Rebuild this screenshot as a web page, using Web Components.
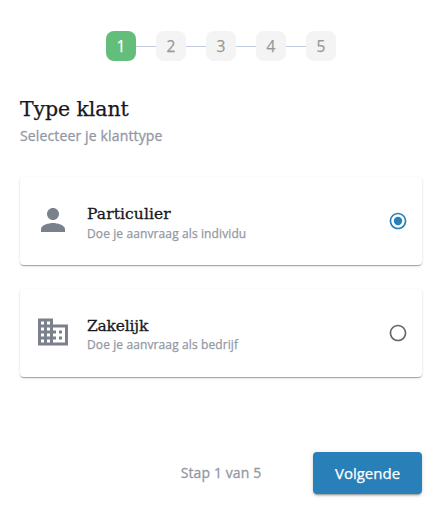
<!DOCTYPE html>
<html lang="nl">
<head>
<meta charset="utf-8">
<title>Type klant</title>
<style>
html,body{margin:0;background:#fff}
body{font-family:"Open Sans","Noto Sans",sans-serif;color:#16181d}
</style>
</head>
<body>
<customer-wizard></customer-wizard>
<script>
class StepIndicator extends HTMLElement {
  connectedCallback() {
    const total = +this.getAttribute('total'), current = +this.getAttribute('current');
    let html = '';
    for (let i = 1; i <= total; i++) {
      html += (i > 1 ? '<i></i>' : '') + `<span class="${i === current ? 'on' : ''}">${i}</span>`;
    }
    this.attachShadow({mode: 'open'}).innerHTML = `<style>
      :host{display:flex;justify-content:center;align-items:center;height:30px}
      span{box-sizing:border-box;width:30px;height:30px;border-radius:8px;background:#f4f4f4;color:#999;font-size:15.5px;line-height:31px;text-align:center;-webkit-text-stroke:.25px currentColor}
      .on{background:#63bd7b;color:#fff}
      i{width:20px;height:1px;background:#c3cadd}
    </style>${html}`;
  }
}
customElements.define('step-indicator', StepIndicator);

class PageHeading extends HTMLElement {
  connectedCallback() {
    this.attachShadow({mode: 'open'}).innerHTML = `<style>
      :host{display:block}
      h1{margin:0;font:400 20.5px/30px "DejaVu Serif",serif;letter-spacing:-.1px;-webkit-text-stroke:.25px #16181d;white-space:nowrap}
      p{margin:2px 0 0;font-size:14px;line-height:20px;letter-spacing:.14px;-webkit-text-stroke:.3px #9298a3;color:#9298a3;white-space:nowrap}
    </style><h1><slot></slot></h1><p><slot name="sub"></slot></p>`;
  }
}
customElements.define('page-heading', PageHeading);

class RadioMark extends HTMLElement {
  connectedCallback() {
    const on = this.hasAttribute('checked');
    this.attachShadow({mode: 'open'}).innerHTML = `<style>
      :host{display:block;width:20px;height:20px;color:${on ? '#2980b9' : '#666'}} svg{display:block}
    </style><svg width="20" height="20" viewBox="0 0 24 24" fill="currentColor">
      <path d="M12 2C6.48 2 2 6.48 2 12s4.48 10 10 10 10-4.48 10-10S17.52 2 12 2zm0 18c-4.42 0-8-3.58-8-8s3.58-8 8-8 8 3.58 8 8-3.58 8-8 8z"/>
      ${on ? '<circle cx="12" cy="12" r="5"/>' : ''}</svg>`;
  }
}
customElements.define('radio-mark', RadioMark);

class OptionCard extends HTMLElement {
  connectedCallback() {
    this.attachShadow({mode: 'open'}).innerHTML = `<style>
      :host{display:flex;align-items:center;box-sizing:border-box;height:88px;padding:0 14px 0 15px;border-radius:4px;background:#fff;
        box-shadow:0 2px 1px -1px rgba(0,0,0,.2),0 1px 1px 0 rgba(0,0,0,.14),0 1px 3px 0 rgba(0,0,0,.12)}
      ::slotted(svg){display:block;width:36px;height:36px;fill:#7b818c;flex:none;margin-top:-2px}
      .text{flex:1;margin-left:16px;padding-top:3px}
      h2{margin:0;font:400 15.5px/22px "DejaVu Serif",serif;-webkit-text-stroke:.3px #16181d;letter-spacing:var(--title-spacing,.1px);white-space:nowrap}
      p{margin:var(--sub-shift,0) 0 0;font-size:12px;line-height:18px;letter-spacing:.11px;-webkit-text-stroke:.25px #9298a3;color:#9298a3;white-space:nowrap}
    </style><slot name="icon"></slot><div class="text"><h2><slot></slot></h2><p><slot name="sub"></slot></p></div>
    <radio-mark ${this.hasAttribute('checked') ? 'checked' : ''}></radio-mark>`;
  }
}
customElements.define('option-card', OptionCard);

class WizardFooter extends HTMLElement {
  connectedCallback() {
    this.attachShadow({mode: 'open'}).innerHTML = `<style>
      :host{display:grid;grid-template-columns:1fr auto 1fr;align-items:center;height:42px}
      .status{grid-column:2;padding-bottom:2px;font-size:14px;letter-spacing:.1px;-webkit-text-stroke:.3px #9298a3;color:#9298a3;white-space:nowrap}
      button{justify-self:end;width:109px;height:42px;padding:0;border:0;border-radius:4px;background:#2980b9;color:#fff;font:400 15px/42px "Open Sans","Noto Sans",sans-serif;-webkit-text-stroke:.25px #fff;
        box-shadow:0 3px 1px -2px rgba(0,0,0,.2),0 2px 2px 0 rgba(0,0,0,.14),0 1px 5px 0 rgba(0,0,0,.12)}
    </style><span class="status"><slot></slot></span><button><slot name="next"></slot></button>`;
  }
}
customElements.define('wizard-footer', WizardFooter);

class CustomerWizard extends HTMLElement {
  connectedCallback() {
    this.attachShadow({mode: 'open'}).innerHTML = `<style>
      :host{display:block;box-sizing:border-box;width:443px;height:514px;padding:31px 21px 0 20px}
      page-heading{margin-top:33px}
      .cards{display:grid;gap:24px;margin-top:31px}
      .business{--title-spacing:-.2px;--sub-shift:-1px}
      wizard-footer{margin-top:75px}
    </style>
    <step-indicator total="5" current="1"></step-indicator>
    <page-heading>Type klant<span slot="sub">Selecteer je klanttype</span></page-heading>
    <div class="cards">
      <option-card checked>
        <svg slot="icon" viewBox="0 0 24 24"><path d="M12 12c2.21 0 4-1.79 4-4s-1.79-4-4-4-4 1.79-4 4 1.79 4 4 4zm0 2c-2.67 0-8 1.34-8 4v2h16v-2c0-2.66-5.33-4-8-4z"/></svg>
        Particulier<span slot="sub">Doe je aanvraag als individu</span>
      </option-card>
      <option-card class="business">
        <svg slot="icon" viewBox="0 0 24 24"><path d="M12 7V3H2v18h20V7H12zM6 19H4v-2h2v2zm0-4H4v-2h2v2zm0-4H4V9h2v2zm0-4H4V5h2v2zm4 12H8v-2h2v2zm0-4H8v-2h2v2zm0-4H8V9h2v2zm0-4H8V5h2v2zm10 12h-8v-2h2v-2h-2v-2h2v-2h-2V9h8v10zm-2-8h-2v2h2v-2zm0 4h-2v2h2v-2z"/></svg>
        Zakelijk<span slot="sub">Doe je aanvraag als bedrijf</span>
      </option-card>
    </div>
    <wizard-footer>Stap 1 van 5<span slot="next">Volgende</span></wizard-footer>`;
  }
}
customElements.define('customer-wizard', CustomerWizard);
</script>
</body>
</html>
